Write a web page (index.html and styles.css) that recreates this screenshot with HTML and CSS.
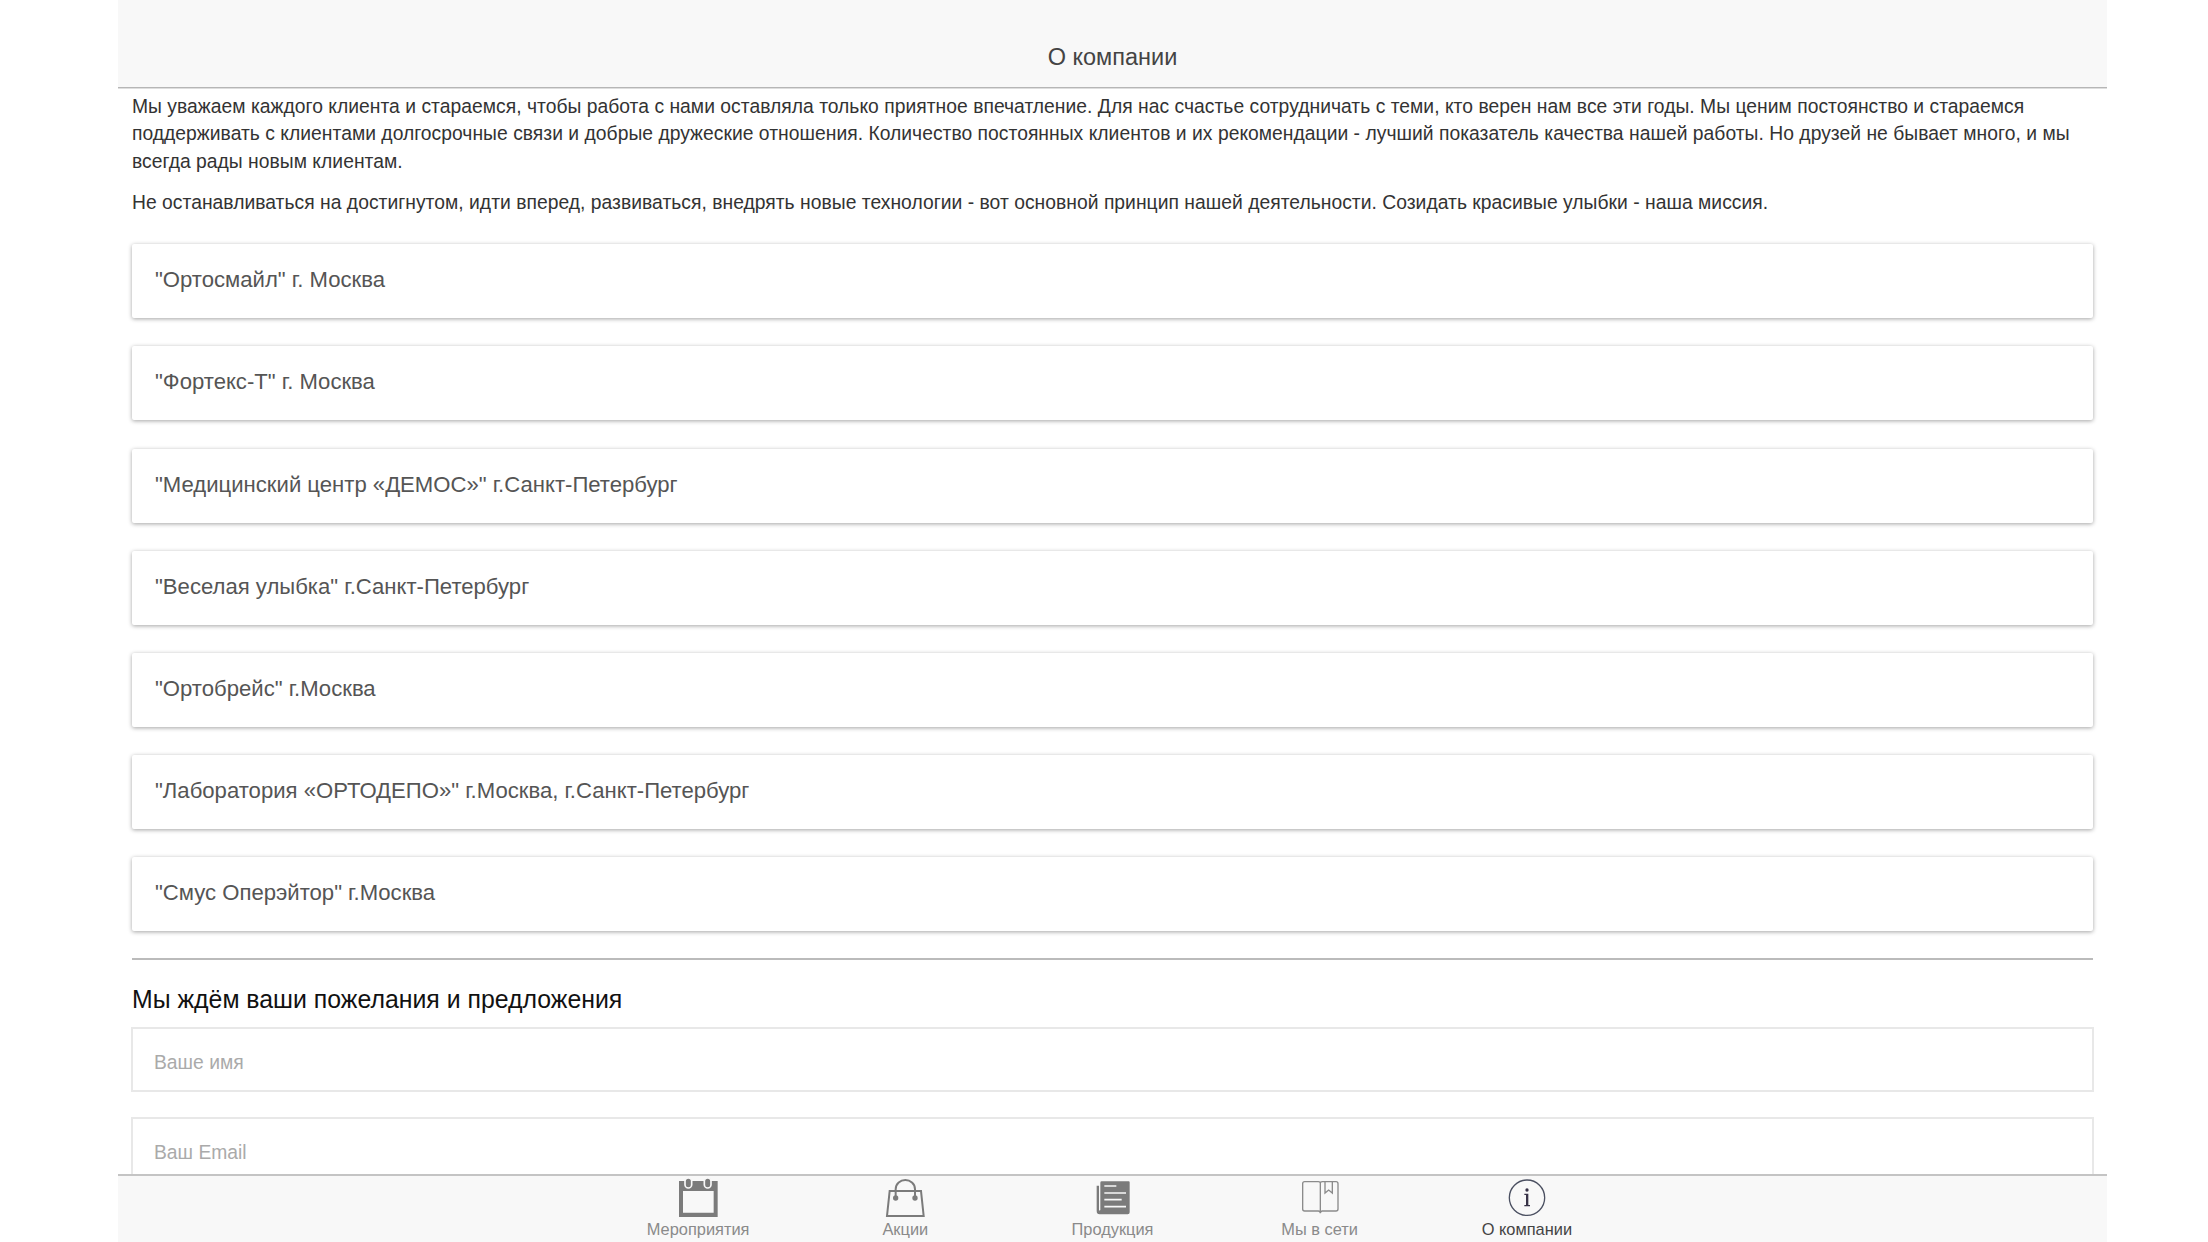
FILE: index.html
```html
<!DOCTYPE html>
<html lang="ru">
<head>
<meta charset="utf-8">
<title>О компании</title>
<link rel="stylesheet" href="styles.css">
</head>
<body>
<div class="app">
  <header class="bar"><h1 class="bar-title">О компании</h1></header>
  <main class="content">
    <p class="about">Мы уважаем каждого клиента и стараемся, чтобы работа с нами оставляла только приятное впечатление. Для нас счастье сотрудничать с теми, кто верен нам все эти годы. Мы ценим постоянство и стараемся<br>поддерживать с клиентами долгосрочные связи и добрые дружеские отношения. Количество постоянных клиентов и их рекомендации - лучший показатель качества нашей работы. Но друзей не бывает много, и мы<br>всегда рады новым клиентам.</p>
    <p class="about">Не останавливаться на достигнутом, идти вперед, развиваться, внедрять новые технологии - вот основной принцип нашей деятельности. Созидать красивые улыбки - наша миссия.</p>
    <ul class="cards">
      <li class="card">"Ортосмайл" г. Москва</li>
      <li class="card">"Фортекс-Т" г. Москва</li>
      <li class="card">"Медицинский центр «ДЕМОС»" г.Санкт-Петербург</li>
      <li class="card">"Веселая улыбка" г.Санкт-Петербург</li>
      <li class="card">"Ортобрейс" г.Москва</li>
      <li class="card">"Лаборатория «ОРТОДЕПО»" г.Москва, г.Санкт-Петербург</li>
      <li class="card">"Смус Оперэйтор" г.Москва</li>
    </ul>
    <div class="rule"></div>
    <h2 class="form-title">Мы ждём ваши пожелания и предложения</h2>
    <form class="form">
      <input class="field" type="text" placeholder="Ваше имя">
      <input class="field" type="text" placeholder="Ваш Email">
    </form>
  </main>
  <nav class="tabs">
    <a class="tab">
      <svg class="icon" viewBox="0 0 120 120"><path fill="#7b7b7b" fill-rule="evenodd" d="M3 9H119V117H3ZM15 39V104H107V39Z"/><g fill="#7b7b7b" stroke="#f8f8f8" stroke-width="5"><rect x="21" y="0" width="20" height="30" rx="10"/><rect x="79" y="0" width="20" height="30" rx="10"/></g></svg>
      <span class="label">Мероприятия</span>
    </a>
    <a class="tab">
      <svg class="icon" viewBox="0 0 120 120"><g fill="none" stroke="#7b7b7b" stroke-width="6"><path d="M14 39H108L116 114H6Z"/><path d="M32 58V34C32 -3 90 -3 90 34V58"/></g><circle cx="32" cy="60" r="8" fill="#7b7b7b"/><circle cx="90" cy="60" r="8" fill="#7b7b7b"/></svg>
      <span class="label">Акции</span>
    </a>
    <a class="tab">
      <svg class="icon" viewBox="0 0 120 120"><path fill="#7b7b7b" d="M26 10H107Q110 10 110 13V103Q110 109 104 109H20Q11 109 11 99V23H18V96Q19 99 22 96V14Q22 10 26 10Z"/><g stroke="#f8f8f8" stroke-width="5"><path d="M34 24H70M34 45H99M34 65H86M34 86H99"/></g></svg>
      <span class="label">Продукция</span>
    </a>
    <a class="tab">
      <svg class="icon" viewBox="0 0 120 120"><g fill="none" stroke="#8b8b8b" stroke-width="4"><path d="M14 11H55Q61 11 61 16Q61 11 67 11H108Q114 11 114 17V93Q114 99 108 99H67Q61 99 61 106Q61 99 55 99H14Q8 99 8 93V17Q8 11 14 11ZM61 14V106"/><path d="M75 12V45L86 36L97 45V12"/></g></svg>
      <span class="label">Мы в сети</span>
    </a>
    <a class="tab tab-active">
      <svg class="icon" viewBox="0 0 120 120"><circle cx="60" cy="59" r="53" fill="none" stroke="#4b5061" stroke-width="4"/><circle cx="60" cy="36" r="5" fill="#383347"/><path fill="#383347" d="M52 47H64V81H69V85H52V81H57V51H52Z"/></svg>
      <span class="label">О компании</span>
    </a>
  </nav>
</div>
</body>
</html>
```
FILE: styles.css
```css
* { box-sizing: border-box; }
body {
  margin: 0;
  background: #fff;
  font-family: "Liberation Sans", Arial, sans-serif;
}
.app {
  display: flex;
  flex-direction: column;
  width: 1989px;
  height: 1242px;
  margin-left: 118px;
  overflow: hidden;
}
.bar {
  flex: none;
  display: flex;
  justify-content: center;
  height: 88px;
  padding-top: 42px;
  background: #f8f8f8;
  border-bottom: 1px solid #b6b6b6;
  box-shadow: 0 1px #dedede;
}
.bar-title {
  margin: 0;
  font-size: 23.5px;
  line-height: 30px;
  font-weight: 400;
  color: #444;
}
.content {
  flex: 1;
  min-height: 0;
  overflow: hidden;
  padding: 4px 14px 0;
  margin-top: 1px;
}
.about {
  margin: 0 0 14px;
  font-size: 19.3px;
  line-height: 27.4px;
  letter-spacing: .027px;
  color: #333;
  white-space: nowrap;
}
.cards {
  display: flex;
  flex-direction: column;
  gap: 28.2px;
  margin: 27.6px 0 0;
  padding: 0;
  list-style: none;
}
.card {
  height: 74px;
  padding: 0 23px;
  font-size: 22.12px;
  line-height: 72px;
  color: #555;
  background: #fff;
  border-radius: 2px;
  box-shadow: 0 1px 4px rgba(0, 0, 0, .36);
}
.rule {
  height: 2px;
  margin-top: 27px;
  background: #bbb;
}
.form-title {
  margin: 23px 0 0;
  font-size: 24.85px;
  line-height: 34px;
  font-weight: 400;
  color: #111;
}
.form {
  display: flex;
  flex-direction: column;
  gap: 25px;
  margin: 10px -1px 0;
}
.field {
  height: 65px;
  padding: 6px 21px 0;
  border: 2px solid #e8e8e8;
  border-radius: 0;
  background: #fff;
  font-family: inherit;
  font-size: 19.3px;
}
.field::placeholder { color: #aaa; }
.tabs {
  flex: none;
  display: flex;
  justify-content: center;
  height: 68px;
  background: #f8f8f8;
  border-top: 2px solid #c4c4c4;
}
.tab {
  display: flex;
  flex-direction: column;
  align-items: center;
  width: 207.2px;
  padding-top: 2px;
  color: #8a8a8a;
}
.icon { width: 40px; height: 40px; }
.label {
  margin-top: 2px;
  font-size: 16.4px;
  line-height: 18px;
  white-space: nowrap;
}
.tab-active { color: #444; }
```
